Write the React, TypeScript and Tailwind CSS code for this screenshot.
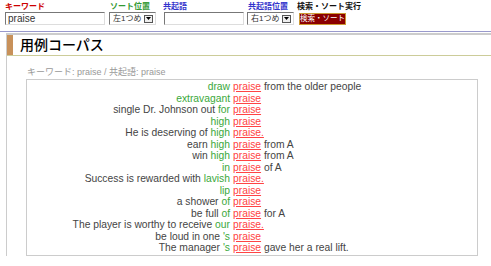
import React from "react";

type Line = [string, string, string, string];

const lines: Line[] = [
  ["", "draw", "praise", " from the older people"],
  ["", "extravagant", "praise", ""],
  ["single Dr. Johnson out ", "for", "praise", ""],
  ["", "high", "praise", ""],
  ["He is deserving of ", "high", "praise.", ""],
  ["earn ", "high", "praise", " from A"],
  ["win ", "high", "praise", " from A"],
  ["", "in", "praise", " of A"],
  ["Success is rewarded with ", "lavish", "praise.", ""],
  ["", "lip", "praise", ""],
  ["a shower ", "of", "praise", ""],
  ["be full ", "of", "praise", " for A"],
  ["The player is worthy to receive ", "our", "praise.", ""],
  ["be loud in one ", "'s", "praise", ""],
  ["The manager ", "'s", "praise", " gave her a real lift."],
];

function Select({ label }: { label: string }) {
  return (
    <div className="flex h-[13px] w-[47px] items-center justify-between border border-t-[#777] border-l-[#777] border-r-[#ddd] border-b-[#ddd] bg-white pl-[3px] pr-[2px]">
      <span className="text-[8px] leading-none text-[#333]">{label}</span>
      <span className="flex h-[8px] w-[9px] items-center justify-center border border-[#555] bg-[#eee]">
        <svg width="5" height="3" viewBox="0 0 5 3">
          <path d="M0 0H5L2.5 3Z" fill="#000" />
        </svg>
      </span>
    </div>
  );
}

export default function App() {
  return (
    <div className="h-[266px] w-[491px] overflow-hidden bg-white font-['Liberation_Sans','Noto_Sans_CJK_JP',sans-serif] text-[#333]">
      {/* form */}
      <div className="flex items-start pl-[5px] pt-[3px]">
        <div className="flex w-[104px] flex-col">
          <span className="h-[9px] text-[8px] font-bold leading-[8px] text-[#cc0000]">キーワード</span>
          <div className="flex h-[13px] w-[100px] items-center border border-t-[#777] border-l-[#777] border-r-[#ddd] border-b-[#ddd] pl-[2px] text-[10px] text-[#333]">
            praise
          </div>
        </div>
        <div className="flex w-[54px] flex-col">
          <span className="h-[9px] pl-[1px] text-[8px] font-bold leading-[8px] text-[#339933]">ソート位置</span>
          <Select label="左1つめ" />
        </div>
        <div className="flex w-[84px] flex-col">
          <span className="h-[9px] text-[8px] font-bold leading-[8px] text-[#3333cc]">共起語</span>
          <div className="ml-[1px] h-[13px] w-[80px] border border-t-[#777] border-l-[#777] border-r-[#ddd] border-b-[#ddd]" />
        </div>
        <div className="flex w-[50px] flex-col">
          <span className="h-[9px] pl-[1px] text-[8px] font-bold leading-[8px] text-[#3333cc]">共起語位置</span>
          <Select label="右1つめ" />
        </div>
        <div className="flex flex-col">
          <span className="h-[10px] text-[8px] font-bold leading-[8px] text-[#111]">検索・ソート実行</span>
          <div className="ml-[2px] flex h-[12px] w-[47px] items-center justify-center border border-[#cc9933] bg-[#8b0000] text-[7.5px] leading-none text-white">
            検索・ソート
          </div>
        </div>
      </div>

      {/* purple divider */}
      <div className="mt-[6px] h-px w-full bg-[#9999cc]" />

      {/* main */}
      <div className="ml-[6px] mt-[1px] border-l border-t-2 border-[#cccccc]">
        <div className="flex h-[21px] border-b border-[#cccc99]">
          <div className="w-[6px] bg-[#c8915a]" />
          <div className="ml-[7px] flex items-center text-[14px] font-medium leading-none text-black">用例コーパス</div>
        </div>

        <div className="mt-[11px] pl-[20px] text-[9px] leading-[10px] text-[#999]">
          キーワード: praise / 共起語: praise
        </div>

        <div className="ml-[19px] mt-[2px] w-[452px] border border-[#cccccc] pb-[1px] pt-[1px] text-[10.3px] leading-[11.5px]">
          {lines.map(([pre, col, kw, post], i) => (
            <div key={i} className="grid grid-cols-[203px_1fr] gap-x-[3px] whitespace-pre">
              <div className="text-right">
                <span className="text-[#444]">{pre}</span>
                <span className="text-[#3aa83a]">{col}</span>
              </div>
              <div>
                <span className="text-[#ff4444] underline">{kw}</span>
                <span className="text-[#444]">{post}</span>
              </div>
            </div>
          ))}
        </div>
      </div>
    </div>
  );
}
